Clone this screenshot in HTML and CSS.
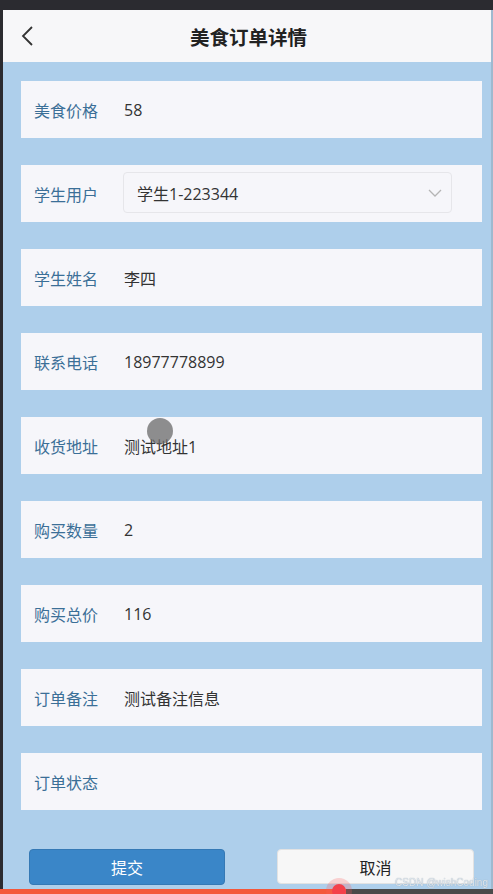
FILE: index.html
```html
<!DOCTYPE html>
<html lang="zh-CN">
<head>
    <meta charset="UTF-8">
    <meta name="viewport" content="width=device-width, initial-scale=1.0">
    <title>美食订单详情</title>
    <link rel="stylesheet" href="styles.css">
</head>
<body>
    <div class="app">
        <div class="header">
            <span class="back">
                <svg width="14" height="22" viewBox="0 0 14 22"><path d="M12 2 L3 11 L12 20" fill="none" stroke="#333" stroke-width="1.8"/></svg>
            </span>
            <h1>美食订单详情</h1>
        </div>

        <div class="content">
            <div class="form-item">
                <span class="label">美食价格</span>
                <span class="value">58</span>
            </div>
            <div class="form-item">
                <span class="label">学生用户</span>
                <div class="select">
                    <span>学生1-223344</span>
                    <svg width="14" height="8" viewBox="0 0 14 8"><path d="M1 1 L7 7 L13 1" fill="none" stroke="#b5b5b5" stroke-width="1.3"/></svg>
                </div>
            </div>
            <div class="form-item">
                <span class="label">学生姓名</span>
                <span class="value">李四</span>
            </div>
            <div class="form-item">
                <span class="label">联系电话</span>
                <span class="value">18977778899</span>
            </div>
            <div class="form-item">
                <span class="label">收货地址</span>
                <span class="value">测试地址1</span>
            </div>
            <div class="form-item">
                <span class="label">购买数量</span>
                <span class="value">2</span>
            </div>
            <div class="form-item">
                <span class="label">购买总价</span>
                <span class="value">116</span>
            </div>
            <div class="form-item">
                <span class="label">订单备注</span>
                <span class="value">测试备注信息</span>
            </div>
            <div class="form-item">
                <span class="label">订单状态</span>
                <span class="value"></span>
            </div>

            <div class="btn-row">
                <button class="btn btn-submit">提交</button>
                <button class="btn btn-cancel">取消</button>
            </div>
        </div>
    </div>

    <!-- capas del reproductor de video -->
    <div class="touch-dot"></div>
    <div class="watermark">CSDN @wishCoding</div>
    <div class="progress">
        <div class="progress-done"></div>
        <div class="progress-knob"></div>
    </div>
</body>
</html>
```

FILE: styles.css
```css
body {
    margin: 0;
    background: #2b2b30;
    font-family: "Noto Sans CJK SC", "Noto Sans", sans-serif;
    overflow: hidden;
}
.app {
    margin: 10px 0 0 3px;
    background: #aecfeb;
    border-right: 2px solid #9fb9cf;
}
.header {
    position: relative;
    height: 52px;
    background: #f7f7f9;
    display: flex;
    align-items: center;
    justify-content: center;
}
.header h1 {
    margin: 0 0 0 3px;
    font-size: 19.5px;
    font-weight: bold;
    color: #222;
}
.back {
    position: absolute;
    left: 17px;
    top: 15px;
}
.content {
    padding: 19px 9px 4px 18px;
}
.form-item {
    height: 57px;
    margin-bottom: 27px;
    background: #f6f6fa;
    display: flex;
    align-items: center;
    padding-left: 13px;
}
.label {
    width: 90px;
    font-size: 16px;
    color: #3b6f97;
}
.value {
    font-family: "Open Sans", "Noto Sans CJK SC", sans-serif;
    font-size: 16px;
    color: #333;
}
.select {
    width: 305px;
    height: 39px;
    margin-left: -1px;
    margin-top: -2px;
    border: 1px solid #e6e6ea;
    border-radius: 4px;
    display: flex;
    align-items: center;
    justify-content: space-between;
    padding: 0 9px 0 13px;
    font-family: "Open Sans", "Noto Sans CJK SC", sans-serif;
    font-size: 16px;
    color: #333;
}
.btn-row {
    display: flex;
    justify-content: space-between;
    padding: 12px 8px 0 8px;
}
.btn {
    height: 36px;
    font-family: inherit;
    font-size: 16px;
    border-radius: 4px;
    cursor: pointer;
}
.btn-submit {
    width: 196px;
    background: #3a86c8;
    border: 1px solid #3579b5;
    color: white;
}
.btn-cancel {
    width: 197px;
    height: 35px;
    background: #f7f7f7;
    border: 1px solid #e2e2e2;
    color: #222;
}

/* capas superpuestas */
.touch-dot {
    position: fixed;
    left: 147px;
    top: 418px;
    width: 26px;
    height: 26px;
    border-radius: 50%;
    background: rgba(105, 105, 105, 0.75);
}
.watermark {
    position: fixed;
    right: 5px;
    bottom: 6px;
    font-family: "Liberation Sans", sans-serif;
    font-size: 10px;
    color: #dfe7ee;
    text-shadow: 0 0 1px #8d9aa6;
}
.progress {
    position: fixed;
    left: 0;
    right: 0;
    bottom: 0;
    height: 5px;
    background: #4a4a4a;
}
.progress-done {
    width: 346px;
    height: 5px;
    background: #f4583a;
}
.progress-knob {
    position: absolute;
    left: 326px;
    top: -11px;
    width: 26px;
    height: 26px;
    border-radius: 50%;
    background: rgba(250, 90, 90, 0.25);
}
.progress-knob:before {
    content: "";
    position: absolute;
    left: 6px;
    top: 6px;
    width: 14px;
    height: 14px;
    border-radius: 50%;
    background: #f4404a;
}
```
